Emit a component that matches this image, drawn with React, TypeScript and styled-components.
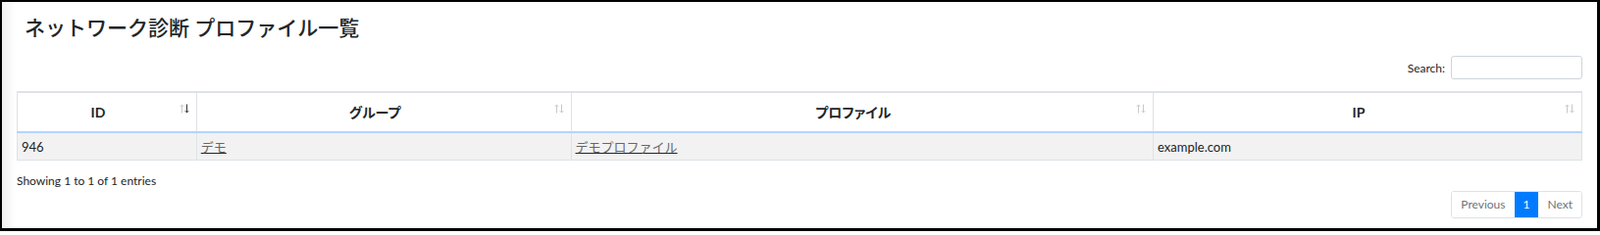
import React from "react";
import styled, { createGlobalStyle } from "styled-components";

const GlobalStyle = createGlobalStyle`
  html, body {
    margin: 0;
    padding: 0;
    background: #fff;
  }
  body {
    font-family: "Lato", "Noto Sans CJK JP", sans-serif;
    color: #212529;
  }
`;

const Frame = styled.div`
  box-sizing: border-box;
  width: 1631px;
  height: 236px;
  border-style: solid;
  border-color: #000;
  border-width: 2px 3px 3px 2px;
  padding: 0 15px;
  background: linear-gradient(to right, #f1f1f1 0px, #fff 14px);
  display: flex;
  flex-direction: column;
`;

const Title = styled.h4`
  margin: 13px 0 0 8px;
  font-size: 21px;
  line-height: 25px;
  font-weight: 500;
  color: #212529;
`;

const SearchBar = styled.div`
  display: flex;
  justify-content: flex-end;
  align-items: center;
  gap: 6px;
  margin-top: 17px;
  font-size: 12px;
`;

const SearchInput = styled.input`
  box-sizing: border-box;
  width: 134px;
  height: 24px;
  border: 1px solid #ced4da;
  border-radius: 3px;
  outline: none;
  font: inherit;
`;

const Table = styled.table`
  box-sizing: border-box;
  margin-top: 12px;
  width: 100%;
  border-collapse: collapse;
  table-layout: fixed;
  font-size: 13px;
  border-top: 2px solid #dee2e6;
`;

const HeadCell = styled.th<{ $w: number }>`
  position: relative;
  width: ${({ $w }) => $w}%;
  padding: 12px 30px 11px 12px;
  font-size: 14px;
  line-height: 16px;
  font-weight: 700;
  text-align: center;
  font-feature-settings: "palt";
  border-left: 1px solid #dee2e6;
  border-right: 1px solid #dee2e6;
  border-bottom: 2px solid #b3d4fc;
`;

const SortMark = styled.svg`
  position: absolute;
  right: 7px;
  top: 11px;
`;

const BodyRow = styled.tr`
  background: #f2f2f2;
`;

const Cell = styled.td`
  padding: 6px 4px 4px;
  line-height: 17px;
  border: 1px solid #dee2e6;
  border-top: none;
`;

const CellLink = styled.a`
  color: #666;
  text-decoration: underline;
  text-decoration-color: #212529;
  cursor: pointer;
`;

const Info = styled.div`
  margin-top: 12px;
  font-size: 12px;
  line-height: 18px;
`;

const Pager = styled.div`
  display: flex;
  justify-content: flex-end;
  margin-top: 1px;
`;

const PageList = styled.div`
  display: flex;
  border: 1px solid #dee2e6;
  border-radius: 3px;
  overflow: hidden;
`;

const PageButton = styled.span<{ $active?: boolean }>`
  padding: 5px 9px;
  font-size: 12px;
  line-height: 16px;
  color: ${({ $active }) => ($active ? "#fff" : "#6c757d")};
  background: ${({ $active }) => ($active ? "#007bff" : "#fff")};
`;

const SortIcon: React.FC<{ active?: boolean }> = ({ active }) => (
  <SortMark width="10" height="10" viewBox="0 0 10 10" fill="none" strokeWidth="1">
    <g stroke="#c8c8c8">
      <path d="M2.5 9.5V1M0.8 2.8L2.5 1L4.2 2.8" />
    </g>
    <g stroke={active ? "#333" : "#c8c8c8"}>
      <path d="M7.5 0.5V9M5.8 7.2L7.5 9L9.2 7.2" />
    </g>
  </SortMark>
);

const columns = [
  { label: "ID", width: 10.0, active: true },
  { label: "グループ", width: 23.82 },
  { label: "プロファイル", width: 38.53 },
  { label: "IP", width: 27.65 },
];

const App: React.FC = () => (
  <>
    <GlobalStyle />
    <Frame>
      <Title>ネットワーク診断 プロファイル一覧</Title>
      <SearchBar>
        <label>Search:</label>
        <SearchInput type="search" />
      </SearchBar>
      <Table>
        <thead>
          <tr>
            {columns.map((c) => (
              <HeadCell key={c.label} $w={c.width}>
                {c.label}
                <SortIcon active={c.active} />
              </HeadCell>
            ))}
          </tr>
        </thead>
        <tbody>
          <BodyRow>
            <Cell>946</Cell>
            <Cell>
              <CellLink>デモ</CellLink>
            </Cell>
            <Cell>
              <CellLink>デモプロファイル</CellLink>
            </Cell>
            <Cell>example.com</Cell>
          </BodyRow>
        </tbody>
      </Table>
      <Info>Showing 1 to 1 of 1 entries</Info>
      <Pager>
        <PageList>
          <PageButton>Previous</PageButton>
          <PageButton $active>1</PageButton>
          <PageButton>Next</PageButton>
        </PageList>
      </Pager>
    </Frame>
  </>
);

export default App;
